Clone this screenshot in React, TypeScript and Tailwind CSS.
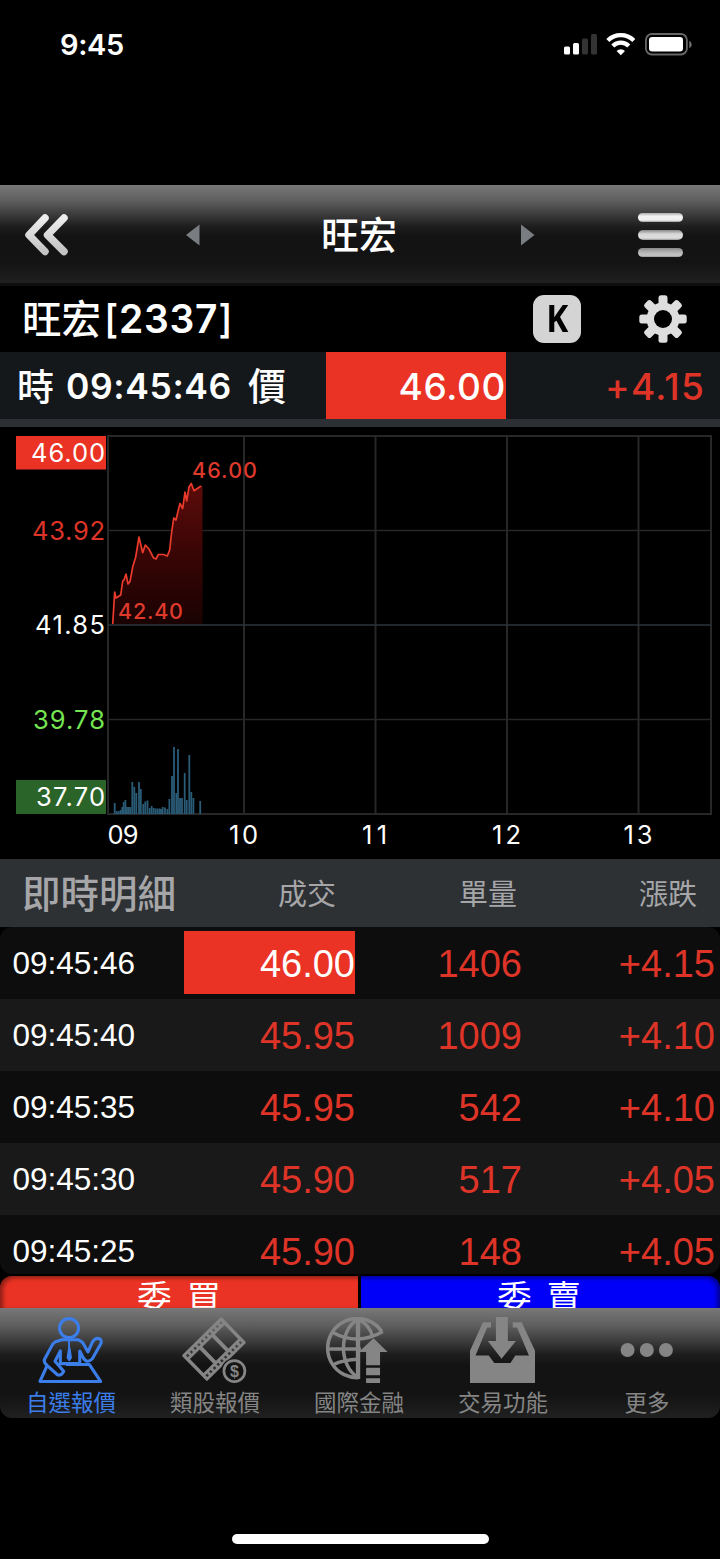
import type { ReactNode } from 'react';

const trades = [
  { time: '09:45:46', price: '46.00', volume: '1406', change: '+4.15', latest: true },
  { time: '09:45:40', price: '45.95', volume: '1009', change: '+4.10' },
  { time: '09:45:35', price: '45.95', volume: '542', change: '+4.10' },
  { time: '09:45:30', price: '45.90', volume: '517', change: '+4.05' },
  { time: '09:45:25', price: '45.90', volume: '148', change: '+4.05' },
];

// [x, height] of each volume bar
const volumes = [
  [114.7, 11], [116.7, 3], [118.7, 3], [120.7, 4], [122.3, 7], [123.7, 12], [125.4, 14], [127, 7],
  [128.7, 7], [130.3, 7], [132.3, 32], [134.3, 27], [136.3, 21], [139, 32], [140.8, 25], [143.3, 10],
  [145.3, 12.5], [147.5, 13.5], [149.7, 6], [151.7, 8], [153.7, 6], [155.7, 5.5], [157.7, 5.5],
  [159.7, 5.5], [161, 5], [162.7, 7], [165, 6.5], [167.4, 5], [169.4, 15], [172, 38], [174, 67],
  [176.3, 21], [178, 65], [180, 16], [182, 16], [184.7, 41], [186.7, 14], [189.3, 59], [191.3, 22],
  [193.4, 16], [200.2, 13],
];

const pricePoints =
  '112.7,624 114.7,592 116,598 120.7,595 122.7,581 124,580 126,574 128,584 130,581.5 132.7,567 135.7,557 139,537 ' +
  '142.7,552.7 145.3,545 149,549 153.3,557.7 156,559 158.3,554.5 163.3,554.5 167.3,556 169.7,550 171.3,535 ' +
  '173.7,518 176,520 178.3,510 180,503.5 182.7,508.5 185,492 186.7,501 189,487 191.3,483.5 194,490.7 201,486';

const priceLabels = [
  { text: '46.00', x: 32, width: 74, y: 462, color: '#fff' },
  { text: '43.92', x: 33, width: 73, y: 540, color: '#de3428' },
  { text: '41.85', x: 36, width: 70, y: 634, color: '#fff' },
  { text: '39.78', x: 34, width: 72, y: 729, color: '#75e552' },
  { text: '37.70', x: 37, width: 69, y: 806, color: '#fff' },
];

const hourLabels = [
  { text: '09', x: 107.5, width: 31 },
  { text: '10', x: 229, width: 29 },
  { text: '11', x: 362, width: 25 },
  { text: '12', x: 492, width: 29 },
  { text: '13', x: 623.5, width: 29 },
];

function StatusBar() {
  return (
    <div className="h-[185px] shrink-0 flex items-start justify-between pl-[60px] pr-[28px] pt-[26px]">
      <span className="font-[Inter] font-semibold text-[29px] leading-9 tracking-[-0.4px] pt-px">9:45</span>
      <svg width="130" height="26" viewBox="562 31 130 26" className="mt-[5px]">
        <rect x="564" y="46.500" width="6" height="8" rx="1.500" fill="#fff" />
        <rect x="573" y="43" width="6" height="11.500" rx="1.500" fill="#fff" />
        <rect x="582" y="38.500" width="6" height="16" rx="1.500" fill="#333" />
        <rect x="591" y="34" width="6" height="20.500" rx="1.500" fill="#333" />
        <g fill="none" stroke="#fff" strokeWidth="4.300">
          <path d="M607.800 40.500a18.500 18.500 0 0 1 26 0" />
          <path d="M612.800 46a11.300 11.300 0 0 1 16 0" />
        </g>
        <path d="M616.600 51a6 6 0 0 1 8.400 0l-4.200 4.200z" fill="#fff" />
        <rect x="645.900" y="34" width="41" height="20.500" rx="6" fill="none" stroke="#666" strokeWidth="1.800" />
        <rect x="649" y="37" width="34" height="14.500" rx="3.200" fill="#fff" />
        <path d="M689.300 41c3 1 3 6 0 7z" fill="#777" />
      </svg>
    </div>
  );
}

function NavBar() {
  return (
    <div className="h-[101px] shrink-0 border-b-[3px] border-[#0e0e0e] bg-[linear-gradient(#787878_0%,#5e5e5e_16%,#3c3c3c_30%,#1e1e1e_42%,#131313_52%,#131313_78%,#202020_100%)] flex items-center">
      <svg width="44" height="42" viewBox="25 214 44 42" className="ml-[25px] mt-[2px]">
        <defs>
          <linearGradient id="metal" x1="0" y1="0" x2="0" y2="1">
            <stop offset="0" stopColor="#eee" />
            <stop offset="1" stopColor="#c4c4c4" />
          </linearGradient>
        </defs>
        <g fill="none" stroke="url(#metal)" strokeWidth="7.500" strokeLinecap="round" strokeLinejoin="round">
          <path d="M45 218 29 235 45 251.500" />
          <path d="M64 218 47.500 235 64 251.500" />
        </g>
      </svg>
      <svg width="14" height="22" viewBox="0 0 14 22" className="ml-[117px] mt-[2px]">
        <path d="M13.500.5v21L0 11z" fill="#797d81" />
      </svg>
      <span className="ml-[121px] mt-[-2px] text-[38px] leading-[50px] font-medium">旺宏</span>
      <svg width="14" height="22" viewBox="0 0 14 22" className="ml-[124px] mt-[2px]">
        <path d="M0 .5v21L13.500 11z" fill="#797d81" />
      </svg>
      <div className="ml-[103px] mt-[2px] flex flex-col gap-[8px]">
        <div className="w-[45px] h-[9.500px] rounded-full bg-[linear-gradient(#aaa,#f2f2f2_35%,#eee_80%,#999)]" />
        <div className="w-[45px] h-[9.500px] rounded-full bg-[linear-gradient(#888,#d8d8d8_40%,#ddd_80%,#999)]" />
        <div className="w-[45px] h-[9.500px] rounded-full bg-[linear-gradient(#888,#aaa_35%,#c6c6c6_80%,#999)]" />
      </div>
    </div>
  );
}

function StockTitle() {
  return (
    <div className="h-[66px] shrink-0 bg-black flex items-center">
      <div className="ml-[22px] w-[511px] flex items-center leading-[50px] font-medium">
        <span className="text-[39.500px] mt-[-5px]">旺宏</span>
        <span className="ml-[3px] font-[Inter] font-semibold text-[39px] tracking-[0.7px] whitespace-nowrap">
          <span className="font-medium">[</span>2337<span className="font-medium">]</span>
        </span>
      </div>
      <div className="size-[48px] rounded-[11px] bg-[#d4d4d4] flex items-center justify-center">
        <span className="font-['Noto_Sans'] font-bold text-[37px] leading-none text-black scale-x-90 mt-[-3px]">K</span>
      </div>
      <svg width="48" height="48" viewBox="-24 -24 48 48" className="ml-[57.500px]">
        <g fill="#dedede">
          {[0, 45, 90, 135].map((angle) => (
            <rect key={angle} x="-4.500" y="-23.700" width="9" height="47.400" rx="2.500" transform={`rotate(${angle})`} />
          ))}
          <circle r="16.500" />
        </g>
        <circle r="9" fill="#000" />
      </svg>
    </div>
  );
}

function QuoteBar() {
  return (
    <div className="h-[75px] shrink-0 bg-[#14181b] border-b-8 border-[#2c3034] flex items-center font-[Inter] font-semibold text-[36px]">
      <div className="w-[326px] pl-[17px] flex items-center leading-[50px]">
        <span className="font-[Noto_Sans_CJK_TC] font-medium text-[37px] mt-[-2px]">時</span>
        <span className="ml-[12px] mt-[3px] text-[35.500px] tracking-[0.600px] w-[165px] whitespace-nowrap">09:45:46</span>
        <span className="ml-[17px] mt-[-3px] font-[Noto_Sans_CJK_TC] font-medium text-[38px]">價</span>
      </div>
      <div className="w-[180px] h-full bg-[#ea3324] flex items-center justify-end font-medium text-[37px] tracking-[0.600px] pt-[2px]">
        46.00
      </div>
      <div className="flex-1 pr-[15px] pt-[2px] text-right font-medium text-[37px] tracking-[1.200px] text-[#de3428]">+4.15</div>
    </div>
  );
}

function IntradayChart() {
  return (
    <svg width="720" height="432" viewBox="0 427 720 432" className="shrink-0 block bg-black font-[Inter]">
      <defs>
        <linearGradient id="area" x1="0" y1="484" x2="0" y2="625" gradientUnits="userSpaceOnUse">
          <stop offset="0" stopColor="#5c0c0a" />
          <stop offset="0.500" stopColor="#380505" />
          <stop offset="1" stopColor="#1a0202" />
        </linearGradient>
      </defs>

      <g stroke="#262729" strokeWidth="2">
        <rect x="108" y="436" width="603" height="378" fill="none" />
        {[244, 375.5, 507, 638.5].map((x) => (
          <line key={x} x1={x} x2={x} y1="436" y2="814" />
        ))}
        <line x1="108" x2="711" y1="530.500" y2="530.500" strokeWidth="1.500" />
        <line x1="108" x2="711" y1="719.500" y2="719.500" strokeWidth="1.500" />
      </g>

      <polygon points={`${pricePoints} 202.500,486 202.500,625 112.700,625`} fill="url(#area)" />
      <line x1="108" x2="711" y1="625" y2="625" stroke="#2b363d" strokeWidth="1.600" />
      <polyline points={pricePoints} fill="none" stroke="#ea3a2b" strokeWidth="1.700" strokeLinejoin="round" />

      {volumes.map(([x, h]) => (
        <rect key={x} x={x - 0.9} y={814 - h} width="1.800" height={h} fill="#2b5c77" />
      ))}

      <rect x="16" y="436" width="90" height="33.500" fill="#ea3324" />
      <rect x="16" y="780" width="90" height="34" fill="#2b6429" />
      {priceLabels.map((l) => (
        <text key={l.text} x={l.x - 1} y={l.y} textLength={l.width} fontSize="25.500" fill={l.color}>
          {l.text}
        </text>
      ))}
      {hourLabels.map((l) => (
        <text key={l.text} x={l.x} y="844" textLength={l.width} fontSize="25.500" fill="#fff">
          {l.text}
        </text>
      ))}
      <g fill="#de3a2c" fontSize="21.500" fontWeight="500">
        <text x="192" y="478" textLength="65">46.00</text>
        <text x="118" y="619" textLength="65">42.40</text>
      </g>
    </svg>
  );
}

function TradeList() {
  return (
    <>
      <div className="h-[68px] shrink-0 bg-[#2d3134] text-[#a6a6a8] flex items-center text-[29px]">
        <span className="ml-[22px] mt-[-5px] w-[256px] text-[38.500px] font-medium leading-[50px]">即時明細</span>
        <span className="w-[181px] mt-[-1px]">成交</span>
        <span className="w-[180px] mt-[-1px]">單量</span>
        <span className="mt-[-1px]">漲跌</span>
      </div>
      <div className="h-[347px] mb-[2px] shrink-0 overflow-hidden rounded-xl font-['Liberation_Sans'] text-[38px]">
        {trades.map((t) => (
          <div key={t.time} className="h-[72px] flex items-center text-[#de3428] odd:bg-[#0d0d0d] even:bg-[#191919]">
            <span className="pl-[12.500px] pt-[2px] w-[184px] text-[31.500px] text-white">{t.time}</span>
            <span
              className={
                t.latest
                  ? 'w-[171px] h-[63px] mt-[-1px] bg-[#ea3324] text-white flex items-center justify-end pt-[3px]'
                  : 'w-[171px] text-right pt-[2px]'
              }
            >
              {t.price}
            </span>
            <span className="w-[167px] text-right pt-[2px]">{t.volume}</span>
            <span className="flex-1 pr-[5px] text-right pt-[2px]">{t.change}</span>
          </div>
        ))}
      </div>
      <div className="h-[32px] shrink-0 overflow-hidden flex gap-[3px] text-[34.500px] leading-[38px]">
        <div className="w-[358px] rounded-tl-xl bg-[#ea3324] shadow-[inset_3px_2px_4px_#0006] pl-[137px] flex gap-[15px]">
          <span>委</span>
          <span>買</span>
        </div>
        <div className="w-[359px] rounded-tr-xl bg-[#0000f8] shadow-[inset_-3px_2px_4px_#0006] pl-[136px] flex gap-[15px]">
          <span>委</span>
          <span>賣</span>
        </div>
      </div>
    </>
  );
}

function PersonIcon() {
  return (
    <svg width="68" height="68" viewBox="0 0 68 68" fill="none" stroke="#3b7de9" strokeWidth="3.200" strokeLinejoin="round" strokeLinecap="round">
      <circle cx="32" cy="11.500" r="9.800" />
      <path d="M24.500 23.500 18 25.500Q15.500 27 14 30L6.500 44Q6 47 9 49.500L20 59.500Q24 61 26.500 56L17.500 45.500 23 35V48H43V35L46 41Q50 49 56 43L65 27Q66 22 61.500 22 58 22 56 26L51.500 36 46.500 27Q45 25 41 23.500" />
      <path d="M24.500 23.500H41" />
      <path d="M32 25v7L30.500 42 32.200 44.500 34 42 32.500 32" fill="#3b7de9" strokeWidth="2" />
      <path d="M9 51 2 66.400H64.500L53 49H30" />
    </svg>
  );
}

function FilmIcon() {
  return (
    <svg width="68" height="68" viewBox="0 0 68 68">
      <mask id="film">
        <g transform="translate(33 33) rotate(-44.500)">
          <rect x="-28.500" y="-18.500" width="57" height="37" rx="1.500" fill="#fff" />
          {[-25, -7, 11].map((x) => (
            <rect key={x} x={x} y="-10" width="14" height="20" fill="#000" />
          ))}
          {[-24, -18.7, -13.3, -8, -2.7, 2.7, 8, 13.3, 18.7, 24].map((x) => (
            <g key={x} fill="#333">
              <rect x={x - 1.2} y="-15.500" width="2.400" height="2.600" />
              <rect x={x - 1.2} y="13" width="2.400" height="2.600" />
            </g>
          ))}
        </g>
        <circle cx="54" cy="55.700" r="13.500" fill="#000" />
      </mask>
      <rect width="68" height="68" fill="#858585" mask="url(#film)" />
      <circle cx="54" cy="55.700" r="10.800" fill="none" stroke="#858585" strokeWidth="2.800" />
      <text x="54" y="61.700" textAnchor="middle" fontSize="16.500" fontWeight="700" fill="#858585" className="font-['Liberation_Sans']">
        $
      </text>
    </svg>
  );
}

function GlobeIcon() {
  return (
    <svg width="68" height="68" viewBox="0 0 68 68">
      <g fill="none" stroke="#858585" strokeWidth="3.600">
        <path d="M33 62.500A30.500 30.500 0 1 1 57.500 15" />
        <path d="M33 0V64" strokeWidth="4.500" />
        <path d="M33 2C13 14 13 50 33 62.500M33 2Q45 8 48 20" />
        <path d="M7 16Q33 30 58.500 15M2.500 33H36M7.500 49Q18 44 33 43.500" />
      </g>
      <path d="M49 22 63.500 36H55.700V49.700H41.300V36H33.700zM41.300 52.300h14.400v7.700H41.300zM41.300 63h14.400v5H41.300z" fill="#858585" />
    </svg>
  );
}

function InboxIcon() {
  return (
    <svg width="68" height="68" viewBox="0 0 68 68" fill="#858585">
      <path d="M0 68V34.700L13.300 5.300H21.700V10.700H17.700L5.700 39.700H19.300L25 47.300H41.700L46.700 39.700H60.700L48.500 10.700H44V5.300H53.300L67 34.700V68z" />
      <path d="M26.700 0H39V24.700H47.300L32.500 43 18.300 24.700H26.700z" />
    </svg>
  );
}

function MoreIcon() {
  return (
    <svg width="68" height="68" viewBox="0 0 68 68" fill="#858585">
      <circle cx="14" cy="34" r="7.200" />
      <circle cx="33.800" cy="34" r="7.200" />
      <circle cx="53.500" cy="34" r="7.200" />
    </svg>
  );
}

function Tab({ label, active, children }: { label: string; active?: boolean; children: ReactNode }) {
  return (
    <div className={`w-[144px] pr-[2px] flex flex-col items-center ${active ? 'text-[#3b7de9]' : 'text-[#858585]'}`}>
      {children}
      <span className="mt-[1px] text-[22.500px] leading-[34px]">{label}</span>
    </div>
  );
}

function TabBar() {
  return (
    <div className="h-[110px] shrink-0 pt-[9px] rounded-b-xl overflow-hidden flex bg-[linear-gradient(#787878_0%,#5e5e5e_16%,#3c3c3c_30%,#1e1e1e_42%,#131313_52%,#131313_78%,#202020_100%)]">
      <Tab label="自選報價" active>
        <PersonIcon />
      </Tab>
      <Tab label="類股報價">
        <FilmIcon />
      </Tab>
      <Tab label="國際金融">
        <GlobeIcon />
      </Tab>
      <Tab label="交易功能">
        <InboxIcon />
      </Tab>
      <Tab label="更多">
        <MoreIcon />
      </Tab>
    </div>
  );
}

export default function App() {
  return (
    <div className="w-[720px] h-[1559px] overflow-hidden bg-black text-white flex flex-col font-['Noto_Sans_CJK_TC',sans-serif]">
      <StatusBar />
      <NavBar />
      <StockTitle />
      <QuoteBar />
      <IntradayChart />
      <TradeList />
      <TabBar />
      <div className="mt-auto mb-[15px] mx-auto w-[257px] h-[10px] shrink-0 rounded-full bg-white" />
    </div>
  );
}
